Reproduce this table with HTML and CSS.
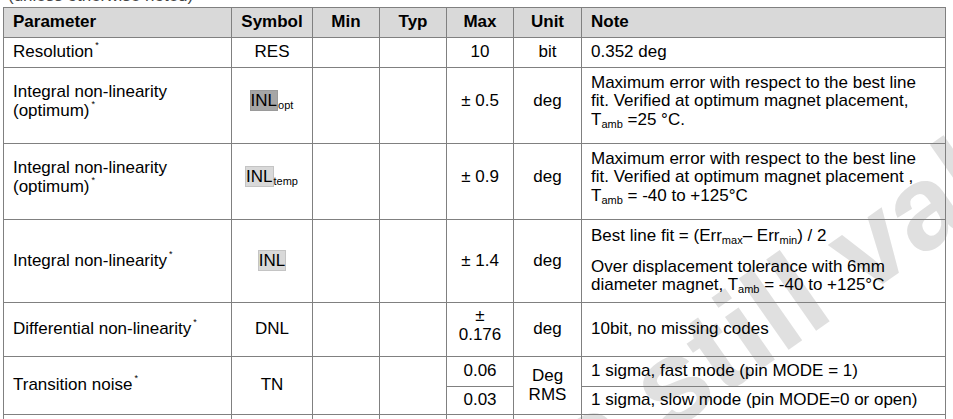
FILE: index.html
```html
<!DOCTYPE html>
<html lang="en">
<head>
<meta charset="utf-8">
<title>Characteristics</title>
<link rel="stylesheet" href="styles.css">
</head>
<body>
<div class="page">
  <p class="caption">(unless otherwise noted)</p>
  <div class="sheet">
    <div class="watermark">The content is still valid</div>
    <table class="spec">
      <colgroup>
        <col class="c-param"><col class="c-sym"><col class="c-min"><col class="c-typ"><col class="c-max"><col class="c-unit"><col class="c-note">
      </colgroup>
      <thead>
        <tr class="h30">
          <th class="left">Parameter</th><th>Symbol</th><th>Min</th><th>Typ</th><th>Max</th><th>Unit</th><th class="left">Note</th>
        </tr>
      </thead>
      <tbody>
        <tr class="h30">
          <td class="left">Resolution<sup class="ast">*</sup></td>
          <td>RES</td><td></td><td></td><td>10</td><td>bit</td>
          <td class="left">0.352 deg</td>
        </tr>
        <tr class="h76">
          <td class="left"><p class="sa">Integral non-linearity<br>(optimum)<sup class="ast">*</sup></p></td>
          <td><p class="sa"><span class="hl dark">INL</span><sub class="sub sym-sub">opt</sub></p></td>
          <td></td><td></td>
          <td><p class="sa">± 0.5</p></td>
          <td><p class="sa">deg</p></td>
          <td class="left"><p class="sa">Maximum error with respect to the best line<br>fit. Verified at optimum magnet placement,<br>T<sub class="sub">amb</sub> =25 °C.</p></td>
        </tr>
        <tr class="h76">
          <td class="left"><p class="sa">Integral non-linearity<br>(optimum)<sup class="ast">*</sup></p></td>
          <td><p class="sa"><span class="hl">INL</span><sub class="sub sym-sub">temp</sub></p></td>
          <td></td><td></td>
          <td><p class="sa">± 0.9</p></td>
          <td><p class="sa">deg</p></td>
          <td class="left"><p class="sa">Maximum error with respect to the best line<br>fit. Verified at optimum magnet placement ,<br>T<sub class="sub">amb</sub> = -40 to +125°C</p></td>
        </tr>
        <tr class="h83">
          <td class="left">Integral non-linearity<sup class="ast">*</sup></td>
          <td><span class="hl">INL</span></td>
          <td></td><td></td>
          <td>± 1.4</td>
          <td>deg</td>
          <td class="left"><p class="gap">Best line fit = (Err<sub class="sub">max</sub>– Err<sub class="sub">min</sub>) / 2</p><p>Over displacement tolerance with 6mm<br>diameter magnet, T<sub class="sub">amb</sub> = -40 to +125°C</p></td>
        </tr>
        <tr class="h54">
          <td class="left">Differential non-linearity<sup class="ast">*</sup></td>
          <td>DNL</td>
          <td></td><td></td>
          <td><p class="sa">± 0.176</p></td>
          <td>deg</td>
          <td class="left">10bit, no missing codes</td>
        </tr>
        <tr class="h30">
          <td class="left" rowspan="2">Transition noise<sup class="ast">*</sup></td>
          <td rowspan="2">TN</td>
          <td rowspan="2"></td><td rowspan="2"></td>
          <td>0.06</td>
          <td rowspan="2">Deg RMS</td>
          <td class="left">1 sigma, fast mode (pin MODE = 1)</td>
        </tr>
        <tr class="h28">
          <td>0.03</td>
          <td class="left">1 sigma, slow mode (pin MODE=0 or open)</td>
        </tr>
        <tr class="h30">
          <td class="left">Hysteresis<sup class="ast">*</sup></td>
          <td>HYS</td><td></td><td></td><td>1</td><td>LSB</td>
          <td class="left">Output hysteresis</td>
        </tr>
      </tbody>
    </table>
  </div>
</div>
</body>
</html>
```

FILE: styles.css
```css
html, body {
  margin: 0;
  padding: 0;
  background: #fff;
}
body {
  font-family: "Liberation Sans", Arial, sans-serif;
  font-size: 17px;
  color: #000;
  overflow: hidden;
  height: 419px;
}
.page {
  padding-left: 3px;
}
.caption {
  margin: -14px 0 0 5px;
  line-height: 19px;
  height: 21px;
  color: #444;
}
.sheet {
  position: relative;
}
.watermark {
  position: absolute;
  left: -88px;
  top: 830px;
  font-size: 120px;
  font-weight: bold;
  color: #e0e0e0;
  white-space: nowrap;
  transform-origin: 0 0;
  transform: rotate(-35deg);
  z-index: 0;
  line-height: 1;
}
.spec {
  position: relative;
  z-index: 1;
  border-collapse: collapse;
  table-layout: fixed;
  width: 942px;
}
.c-param { width: 228px; }
.c-sym { width: 81px; }
.c-min { width: 67px; }
.c-typ { width: 67px; }
.c-max { width: 67px; }
.c-unit { width: 68px; }
.c-note { width: 364px; }
.spec th, .spec td {
  border: 1px solid #808080;
  padding: 4px 9px;
  vertical-align: middle;
  text-align: center;
  line-height: 18.5px;
  font-weight: normal;
}
.spec thead th {
  background: #d9d9d9;
  font-weight: bold;
}
.spec .left {
  text-align: left;
}
.spec p {
  margin: 0;
}
.spec p.sa {
  margin-bottom: 8px;
}
.spec p.gap {
  margin-bottom: 12px;
}
.h30 { height: 30px; }
.h28 { height: 28px; }
.h54 { height: 54px; }
.h76 { height: 76px; }
.h83 { height: 83px; }
.ast {
  font-size: 9px;
  vertical-align: 9px;
  line-height: 0;
  margin-left: 2px;
}
.sub {
  font-size: 11px;
  vertical-align: -3px;
  line-height: 0;
}
.sym-sub {
  margin-left: 1px;
}
.hl {
  background: #d9d9d9;
  box-shadow: 0 0 0 1px #c4c4c4;
}
.hl.dark {
  background: #a6a6a6;
  box-shadow: 0 0 0 1px #9a9a9a;
}
```
